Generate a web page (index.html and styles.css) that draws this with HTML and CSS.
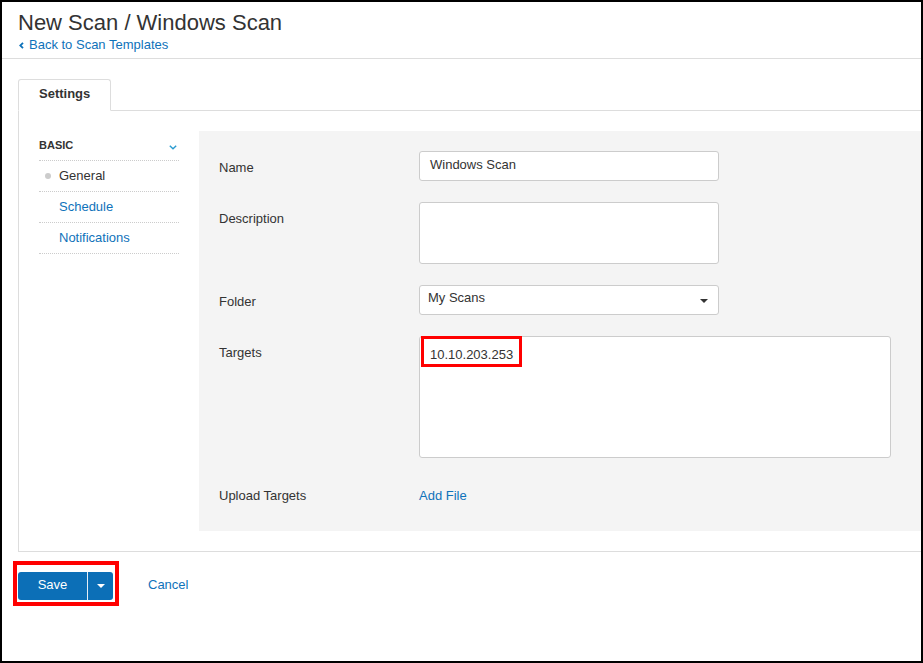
FILE: index.html
```html
<!DOCTYPE html>
<html>
<head>
<meta charset="utf-8">
<link rel="stylesheet" href="styles.css">
</head>
<body>
<div class="frame">
  <header class="header">
    <h1 class="title">New Scan / Windows Scan</h1>
    <a class="back" href="#"><svg class="back-icon" width="5" height="7" viewBox="0 0 5 7"><path d="M4 0.8 L1.3 3.5 L4 6.2" fill="none" stroke="#0f72ba" stroke-width="1.8"/></svg>Back to Scan Templates</a>
  </header>

  <div class="tabs">
    <div class="tab">Settings</div>
  </div>

  <div class="panel">
    <nav class="sidenav">
      <div class="nav-head">
        <span class="nav-title">BASIC</span>
        <svg class="nav-chevron" width="8" height="5" viewBox="0 0 8 5"><path d="M0.8 0.8 L4 3.8 L7.2 0.8" fill="none" stroke="#2a9bd0" stroke-width="1.4"/></svg>
      </div>
      <div class="nav-item active"><span class="dot"></span>General</div>
      <div class="nav-item link">Schedule</div>
      <div class="nav-item link">Notifications</div>
    </nav>

    <section class="form">
      <div class="row">
        <div class="label">Name</div>
        <div class="field input">Windows Scan</div>
      </div>
      <div class="row">
        <div class="label">Description</div>
        <div class="field textarea"></div>
      </div>
      <div class="row">
        <div class="label">Folder</div>
        <div class="field select"><span>My Scans</span><span class="caret"></span></div>
      </div>
      <div class="row targets-row">
        <div class="label">Targets</div>
        <div class="field targets"><span>10.10.203.253</span><div class="highlight hl-targets"></div></div>
      </div>
      <div class="row upload-row">
        <div class="label">Upload Targets</div>
        <a class="add-file" href="#">Add File</a>
      </div>
    </section>
  </div>

  <div class="actions">
    <div class="btn-group">
      <button class="btn-save">Save</button><button class="btn-caret"><span class="caret white"></span></button>
      <div class="highlight hl-save"></div>
    </div>
    <a class="cancel" href="#">Cancel</a>
  </div>
</div>
</body>
</html>
```

FILE: styles.css
```css
* { box-sizing: border-box; }
html, body { margin: 0; padding: 0; background: #fff; }
body {
  font-family: "Liberation Sans", Arial, sans-serif;
  font-size: 13px;
  color: #333;
}
a { text-decoration: none; color: #0f72ba; }

.frame {
  width: 923px;
  height: 663px;
  border: 2px solid #000;
  overflow: hidden;
  position: relative;
}

.header {
  height: 57px;
  padding: 8px 16px 0;
  border-bottom: 1px solid #ddd;
}
.title {
  margin: 0;
  font-size: 22px;
  font-weight: normal;
  line-height: 26px;
  color: #333;
}
.back {
  display: inline-flex;
  align-items: center;
  line-height: 18px;
  font-size: 13px;
  margin-left: 1px;
}
.back-icon { margin-right: 5px; margin-top: 1px; }

.tabs {
  margin-top: 20px;
  margin-left: 16px;
  display: flex;
  border-bottom: 1px solid #ddd;
}
.tab {
  border: 1px solid #ddd;
  border-bottom-color: #fff;
  border-radius: 3px 3px 0 0;
  margin-bottom: -1px;
  padding: 0 20px 2px;
  line-height: 28px;
  font-weight: bold;
  font-size: 13px;
  color: #333;
  background: #fff;
}

.panel {
  margin-left: 16px;
  border-left: 1px solid #ddd;
  border-bottom: 1px solid #ddd;
  padding: 20px 0 20px 20px;
  display: flex;
  gap: 20px;
}

.sidenav { width: 140px; flex: none; }
.nav-head {
  height: 30px;
  padding: 6px 0 0 0;
  display: flex;
  justify-content: space-between;
  align-items: flex-start;
  border-bottom: 1px dotted #ccc;
}
.nav-title {
  font-size: 11px;
  font-weight: bold;
  line-height: 16px;
  color: #333;
}
.nav-chevron { margin-top: 8px; margin-right: 2px; }
.nav-item {
  height: 31px;
  border-bottom: 1px dotted #ccc;
  padding-left: 20px;
  line-height: 30px;
  font-size: 13px;
  position: relative;
}
.nav-item.link { color: #0f72ba; }
.dot {
  position: absolute;
  left: 6px;
  top: 12px;
  width: 6px;
  height: 6px;
  border-radius: 50%;
  background: #ccc;
}

.form {
  flex: 1;
  background: #f4f4f4;
  padding: 20px 0 26px 20px;
}
.row {
  display: flex;
  margin-bottom: 21px;
}
.row:last-child { margin-bottom: 0; }
.targets-row { margin-bottom: 22px; }
.label {
  width: 200px;
  flex: none;
  padding-top: 8px;
  line-height: 18px;
  color: #333;
}
.field {
  background: #fff;
  border: 1px solid #ccc;
  border-radius: 3px;
  line-height: 18px;
  color: #333;
}
.input {
  width: 300px;
  height: 30px;
  padding: 4px 10px;
}
.textarea {
  width: 300px;
  height: 62px;
}
.select {
  width: 300px;
  height: 30px;
  padding: 3px 10px 0 8px;
  display: flex;
  justify-content: space-between;
  align-items: flex-start;
}
.caret {
  display: inline-block;
  width: 0;
  height: 0;
  border-left: 4px solid transparent;
  border-right: 4px solid transparent;
  border-top: 4px solid #333;
  margin-top: 10px;
}
.caret.white { border-top-color: #fff; margin-top: 0; }
.targets {
  width: 472px;
  height: 122px;
  padding: 9px 10px;
  position: relative;
}
.highlight {
  position: absolute;
  border: 3px solid #f00;
  pointer-events: none;
}
.hl-targets {
  left: 1px;
  top: -1px;
  width: 101px;
  height: 31px;
}
.upload-row .label { padding-top: 7px; }
.add-file {
  padding-top: 7px;
  line-height: 18px;
}

.actions {
  display: flex;
  align-items: center;
  margin: 20px 0 0 16px;
}
.btn-group {
  display: flex;
  position: relative;
  height: 28px;
}
.btn-save, .btn-caret {
  border: none;
  background: #0c6fb7;
  color: #fff;
  font-family: "Liberation Sans", Arial, sans-serif;
  font-size: 13px;
  line-height: 18px;
  height: 28px;
  margin: 0;
}
.btn-save {
  width: 70px;
  padding: 4px 0 6px;
  border-radius: 3px 0 0 3px;
  border-right: 1px solid #e6eef6;
}
.btn-caret {
  width: 25px;
  padding: 0;
  border-radius: 0 3px 3px 0;
  display: flex;
  align-items: center;
  justify-content: center;
}
.hl-save {
  border-width: 4px;
  left: -5px;
  top: -11px;
  right: -6px;
  bottom: -6px;
}
.cancel {
  margin-left: 35px;
  line-height: 18px;
  margin-top: -2px;
}
```
